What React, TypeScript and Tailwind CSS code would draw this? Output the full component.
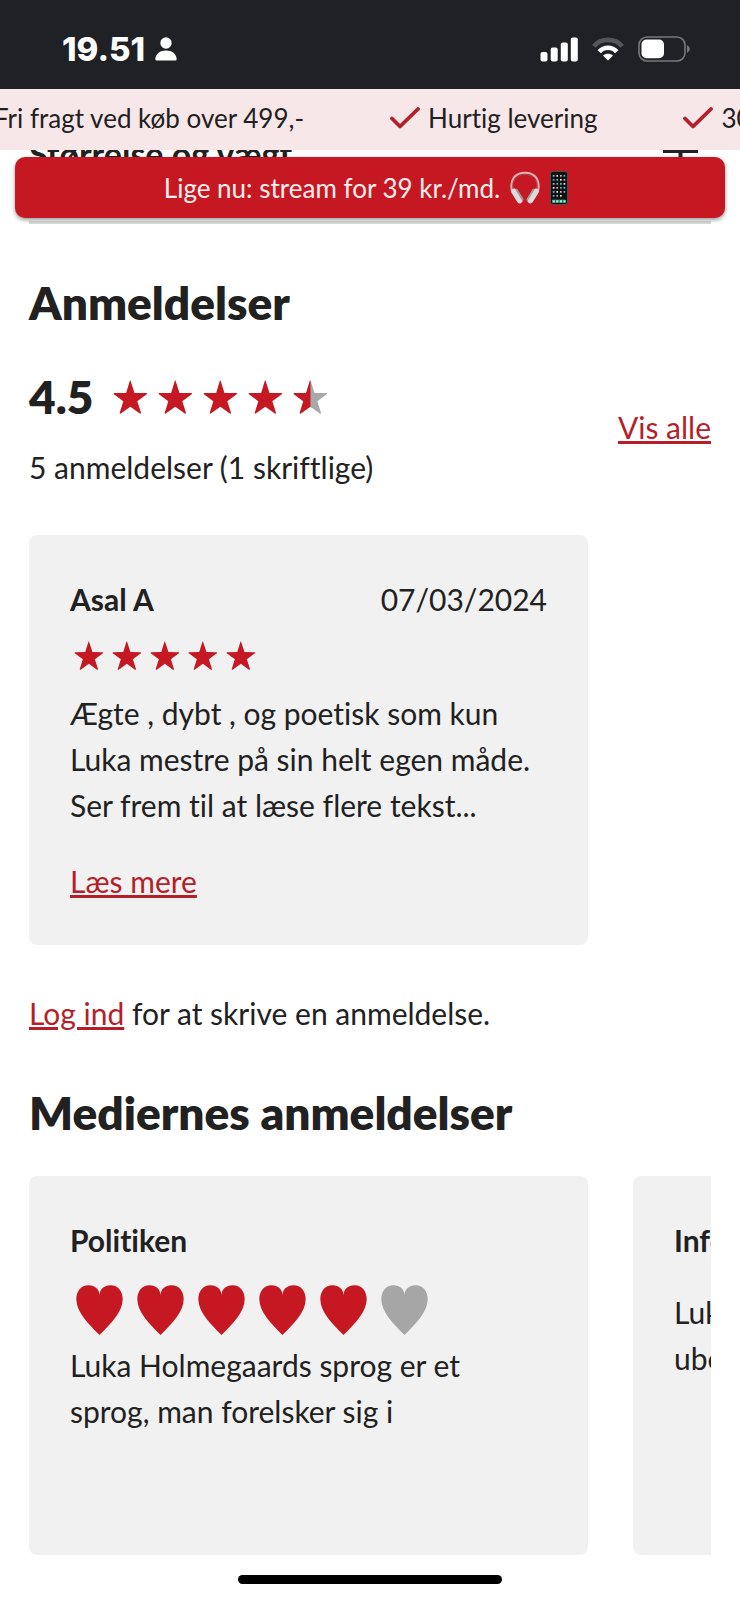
function Check() {
  return (
    <svg viewBox="0 0 30 22" className="h-[22px] w-[30px] shrink-0" fill="none" stroke="#b51f29" strokeWidth="3.8" strokeLinecap="round" strokeLinejoin="round">
      <path d="M2 11.5 L10 19.5 L28 2" />
    </svg>
  );
}

const STAR = 'M18 0.5 L22.1 13.3 L34.5 13.4 Q35.5 13.6 34.7 14.6 L25 21.9 L28.8 33.6 Q28.8 35 27.6 34.5 L17.8 27.4 L8 34.5 Q6.8 35 6.9 33.6 L10.6 21.9 L0.9 14.6 Q0.2 13.6 1.1 13.4 L13.5 13.3 L17.4 0.5 Z';

function Star({ half = false, className }: { half?: boolean; className: string }) {
  return (
    <svg viewBox="0 0 36 36" className={className}>
      <path d={STAR} fill={half ? '#a8a8a8' : '#c51822'} />
      {half && (
        <svg x="0" y="0" width="18" height="36" viewBox="0 0 18 36">
          <path d={STAR} fill="#c51822" />
        </svg>
      )}
    </svg>
  );
}

function Heart({ filled }: { filled: boolean }) {
  return (
    <svg viewBox="0 0 47 50" className="h-[50px] w-[47px]" fill={filled ? '#c51822' : '#a6a6a6'}>
      <path d="M23.5 10.5 C23.5 4.5 28 0.3 34.5 0.3 C42 0.3 46.7 6.5 46.7 14 C46.7 27 35 38.5 23.5 50 C12 38.5 0.3 27 0.3 14 C0.3 6.5 5 0.3 12.5 0.3 C19 0.3 23.5 4.5 23.5 10.5 Z" />
    </svg>
  );
}

function StatusBar() {
  return (
    <div className="flex h-[89px] items-center justify-between bg-[#202125] pt-[9px] pr-[50px] pl-[62px] text-white">
      <div className="flex items-center gap-[10px]">
        <span className="font-[Inter,sans-serif] text-[33px] leading-8 font-extrabold">19.51</span>
        <svg viewBox="0 0 22 24" className="h-6 w-[22px]" fill="currentColor">
          <circle cx="11" cy="6" r="5.7" />
          <path d="M1.8 23.5 Q0.3 23.5 0.3 22 C0.8 17 5 13.6 11 13.6 C17 13.6 21.2 17 21.7 22 Q21.7 23.5 20.2 23.5 Z" />
        </svg>
      </div>
      <div className="flex items-center gap-[14px]">
        <svg viewBox="0 0 38 25" className="h-[25px] w-[38px]" fill="currentColor">
          <rect x="0.5" y="15" width="7" height="9.5" rx="2" />
          <rect x="10.7" y="10.5" width="7" height="14" rx="2" />
          <rect x="20.8" y="5.5" width="7" height="19" rx="2" />
          <rect x="30.8" y="0.5" width="7" height="24" rx="2" />
        </svg>
        <svg viewBox="0 0 32 25" className="h-[25px] w-8" fill="none" stroke="#ffffff" strokeWidth="4.6">
          <path d="M1.8 9.2 C9 0.8 23 0.8 30.2 9.2" stroke="#55565a" />
          <path d="M7.2 14.8 C12 9.4 20 9.4 24.8 14.8" />
          <path d="M16 23.6 L11 18.6 C13.8 16 18.2 16 21 18.6 Z" fill="#ffffff" stroke="none" />
        </svg>
        <svg viewBox="0 0 52 26" className="h-[26px] w-[52px]">
          <rect x="1" y="1" width="46" height="24" rx="8" fill="none" stroke="#77787b" strokeWidth="1.6" />
          <rect x="3.5" y="3.6" width="22.5" height="18.6" rx="5" fill="#ffffff" />
          <path d="M49 9 Q51.8 10.5 51.8 13 Q51.8 15.5 49 17 Z" fill="#77787b" />
        </svg>
      </div>
    </div>
  );
}

function Headphones() {
  return (
    <svg viewBox="0 0 30 34" className="h-[34px] w-[30px]" fill="none">
      <path d="M2.2 21 C-1 9 5 1.8 15 1.8 C25 1.8 31 9 27.8 21" stroke="#eeb0b2" strokeWidth="2" />
      <path d="M3.8 19 C1 10 6.5 3.6 15 3.6 C23.5 3.6 29 10 26.2 19" stroke="#9a5458" strokeWidth="0.8" />
      <path d="M4 20.5 L9.6 29.6" stroke="#dedbdc" strokeWidth="5.6" strokeLinecap="round" />
      <path d="M26 20.5 L20.4 29.6" stroke="#dedbdc" strokeWidth="5.6" strokeLinecap="round" />
      <path d="M6.6 18.8 L12.6 28.6" stroke="#a8999c" strokeWidth="2" strokeLinecap="round" />
      <path d="M23.4 18.8 L17.4 28.6" stroke="#a8999c" strokeWidth="2" strokeLinecap="round" />
    </svg>
  );
}

const APP_COLORS = ['#5fd0c0', '#e9e9e9', '#f2b08a', '#58b7e8'];

function Phone() {
  return (
    <svg viewBox="0 0 18 34" className="h-[34px] w-[18px]">
      <rect x="0.5" y="0.5" width="17" height="33" rx="2.5" fill="#101112" stroke="#56494b" />
      {[4, 8, 12, 16, 20, 24].map((y, row) =>
        [2.8, 6.4, 10, 13.6].map((x, col) =>
          row === 5 && col === 3 ? null : <rect key={`${x}-${y}`} x={x} y={y} width="1.7" height="1.7" fill={APP_COLORS[(row * 3 + col) % 4]} />
        )
      )}
      <rect x="2" y="28.6" width="14" height="3.4" rx="1" fill="#2d6f62" />
      {[2.6, 6.2, 9.8, 13.4].map((x) => (
        <rect key={x} x={x} y="29.2" width="2.2" height="2.2" fill="#9ff0cf" />
      ))}
    </svg>
  );
}

const usps = ['Fri fragt ved køb over 499,-', 'Hurtig levering', '30 dages returret'];

export default function App() {
  return (
    <div className="min-h-screen overflow-hidden bg-white font-[Lato,sans-serif] text-[30px] leading-[46px] text-[#212121] [font-variant-ligatures:no-common-ligatures]">
      <StatusBar />

      <div className="h-[61px] overflow-hidden bg-[#f8e7e8] text-[26px] whitespace-nowrap">
        <ul className="-ml-11 flex h-full w-max gap-[86px] pb-1">
          {usps.map((usp) => (
            <li key={usp} className="flex items-center gap-2">
              <Check />
              {usp}
            </li>
          ))}
        </ul>
      </div>

      <div className="relative h-[74px]">
        <div className="mx-[29px] h-full overflow-hidden border-b-[3px] border-[#dcdcdc]">
          <div className="flex h-2 items-center justify-between pr-[13px] text-[34px] font-bold">
            <span>Størrelse og vægt</span>
            <svg viewBox="0 0 35 18" className="h-[18px] w-[35px] self-start" fill="none" stroke="#212121">
              <path d="M0 1.5 H35" strokeWidth="3" />
              <path d="M17.5 0 V18" strokeWidth="4" />
            </svg>
          </div>
        </div>
        <a href="#stream" className="absolute inset-x-[15px] top-[7px] flex h-[61px] items-center justify-center gap-[10px] rounded-[10px] bg-[#c51822] pr-2 text-[26px] text-[#fdeeee] shadow-[0_2px_4px_rgba(0,0,0,0.4)]">
          Lige nu: stream for 39 kr./md.
          <Headphones />
          <Phone />
        </a>
      </div>

      <main className="px-[29px] pt-[50px]">
        <h2 className="text-[46px] leading-[58px] font-extrabold">Anmeldelser</h2>

        <div className="mt-9 flex items-center justify-between">
          <div>
            <div className="flex items-center gap-5">
              <span className="text-[46px] leading-[58px] font-extrabold">4.5</span>
              <div className="flex gap-[10px]">
                {[0, 1, 2, 3].map((i) => (
                  <Star key={i} className="size-[35px]" />
                ))}
                <Star half className="size-[35px]" />
              </div>
            </div>
            <p className="mt-[18px]">5 anmeldelser (1 skriftlige)</p>
          </div>
          <a href="#alle" className="pb-1 text-[#b51f29] underline">Vis alle</a>
        </div>

        <article className="mt-[45px] w-[559px] rounded-lg bg-[#f1f1f1] p-[41px]">
          <div className="flex justify-between">
            <h3 className="font-bold">Asal A</h3>
            <time dateTime="2024-03-07">07/03/2024</time>
          </div>
          <div className="my-[19px] flex gap-2 px-1">
            {[0, 1, 2, 3, 4].map((i) => (
              <Star key={i} className="size-[30px]" />
            ))}
          </div>
          <p>Ægte , dybt , og poetisk som kun Luka mestre på sin helt egen måde. Ser frem til at læse flere tekst...</p>
          <a href="#mere" className="mt-[30px] inline-block text-[#b51f29] underline">Læs mere</a>
        </article>

        <p className="mt-[45px]">
          <a href="#login" className="text-[#b51f29] underline">Log ind</a> for at skrive en anmeldelse.
        </p>

        <h2 className="mt-12 text-[46px] leading-[58px] font-extrabold">Mediernes anmeldelser</h2>

        <div className="mt-[34px] flex gap-[45px] overflow-hidden">
          <article className="min-h-[379px] w-[559px] shrink-0 rounded-lg bg-[#f1f1f1] p-[41px]">
            <h3 className="font-bold">Politiken</h3>
            <div className="mt-[22px] mb-[7px] flex gap-[14px] px-[6px]">
              {[0, 1, 2, 3, 4, 5].map((i) => (
                <Heart key={i} filled={i < 5} />
              ))}
            </div>
            <p>
              Luka Holmegaards sprog er et
              <br />
              sprog, man forelsker sig i
            </p>
          </article>
          <article className="min-h-[379px] w-[559px] shrink-0 rounded-lg bg-[#f1f1f1] p-[41px]">
            <h3 className="font-bold">Information</h3>
            <p className="mt-[26px]">
              Luka Holmegaard skriver
              <br />
              ubesværet
            </p>
          </article>
        </div>
      </main>

      <div className="mx-auto mt-5 h-[9px] w-[264px] rounded-full bg-black" />
    </div>
  );
}
